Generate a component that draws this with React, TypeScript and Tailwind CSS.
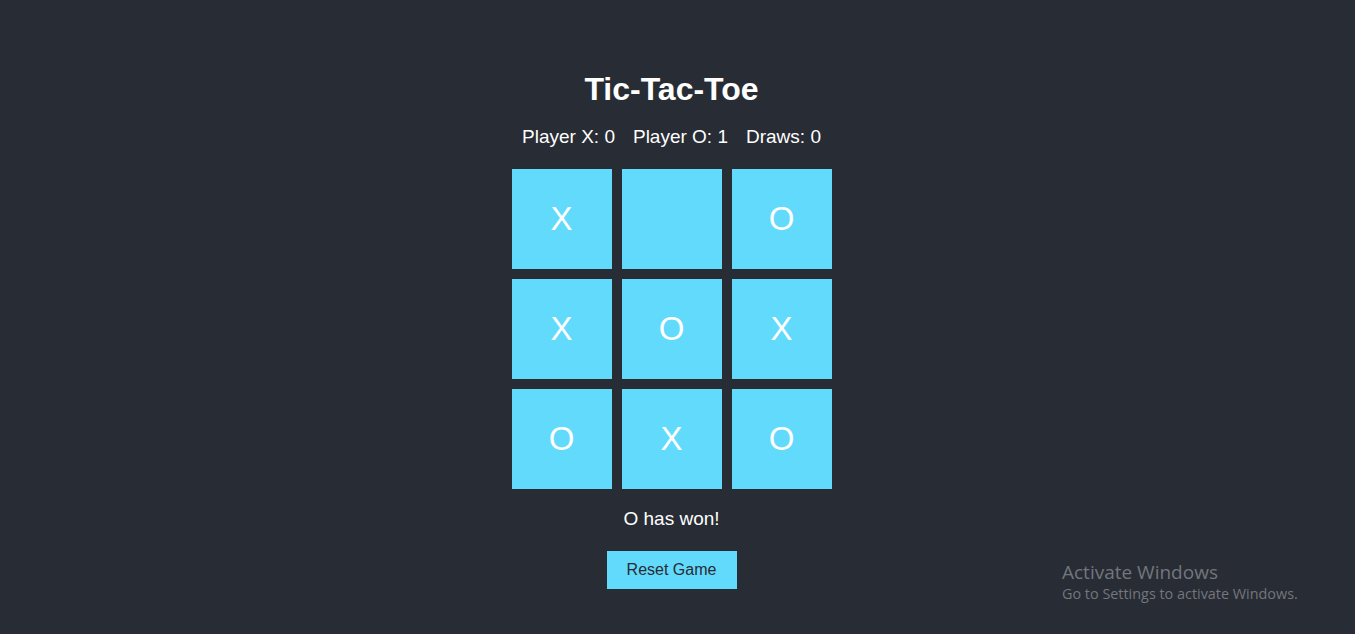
import React from 'react'

const board = ['X', '', 'O', 'X', 'O', 'X', 'O', 'X', 'O']

export default function App() {
  return (
    <div className="relative min-h-[634px] w-full bg-[#282c34] text-white font-['Liberation_Sans',Arial,sans-serif] overflow-hidden">
      <div className="flex flex-col items-center pt-[71px] pr-[12px]">
        <h1 className="text-[32px] leading-[37px] font-bold">Tic-Tac-Toe</h1>
        <div className="mt-[18px] flex gap-[18px] text-[19px] leading-[22px]">
          <span>Player X: 0</span>
          <span>Player O: 1</span>
          <span>Draws: 0</span>
        </div>
        <div className="mt-[21px] grid grid-cols-[repeat(3,100px)] gap-[10px]">
          {board.map((v, i) => (
            <div key={i} className="h-[100px] w-[100px] bg-[#61dafb] flex items-center justify-center text-[33px]">
              {v}
            </div>
          ))}
        </div>
        <p className="mt-[19px] text-[19px] leading-[22px]">O has won!</p>
        <button className="mt-[21px] h-[38px] w-[130px] bg-[#61dafb] text-[#282c34] text-[16px]">Reset Game</button>
      </div>
      <div className="absolute left-[1062px] top-[561px] text-[#73767c] font-['Open_Sans',sans-serif] leading-tight">
        <div className="text-[19px]">Activate Windows</div>
        <div className="text-[14.4px]">Go to Settings to activate Windows.</div>
      </div>
    </div>
  )
}
